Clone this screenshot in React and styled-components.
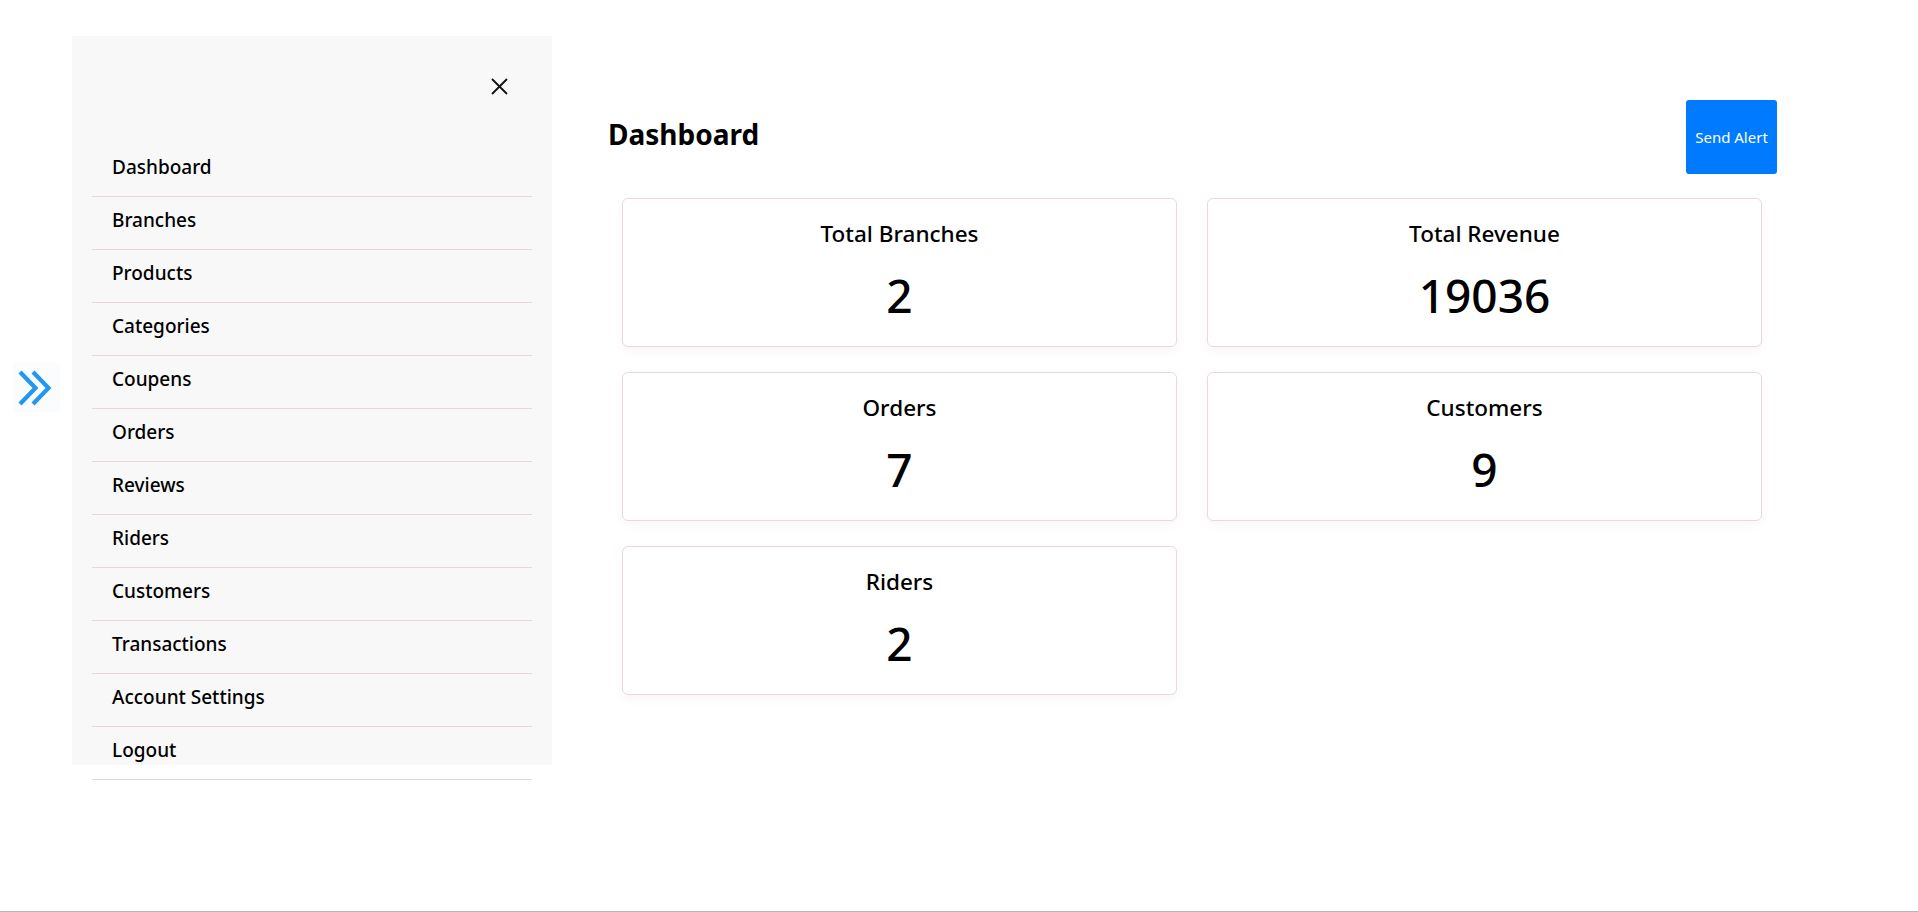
import React from "react";
import styled, { createGlobalStyle } from "styled-components";

const GlobalStyle = createGlobalStyle`
    body {
        margin: 0;
        font-family: "Noto Sans", "Open Sans", sans-serif;
        color: #000;
        background: #fff;
    }
`;

const menu = [
    "Dashboard",
    "Branches",
    "Products",
    "Categories",
    "Coupens",
    "Orders",
    "Reviews",
    "Riders",
    "Customers",
    "Transactions",
    "Account Settings",
    "Logout",
];

const stats = [
    { title: "Total Branches", value: 2 },
    { title: "Total Revenue", value: 19036 },
    { title: "Orders", value: 7 },
    { title: "Customers", value: 9 },
    { title: "Riders", value: 2 },
];

export default function App() {
    return (
        <>
            <GlobalStyle />
            <Page>
                <Gutter>
                    <Toggle aria-label="open menu">
                        <svg width="35" height="36" viewBox="0 0 35 36" fill="none">
                            <polyline
                                points="2,2 17.5,18 2,34"
                                stroke="#2196f3"
                                strokeWidth="4.2"
                            />
                            <polyline
                                points="15,2 30.5,18 15,34"
                                stroke="#2196f3"
                                strokeWidth="4.2"
                            />
                        </svg>
                    </Toggle>
                </Gutter>
                <Sidebar>
                    <SideHead>
                        <Close aria-label="close menu">
                            <svg width="17" height="17" viewBox="0 0 17 17">
                                <path
                                    d="M1 1 L16 16 M16 1 L1 16"
                                    stroke="#111"
                                    strokeWidth="1.8"
                                />
                            </svg>
                        </Close>
                    </SideHead>
                    <Menu>
                        {menu.map(item => (
                            <MenuItem key={item}>{item}</MenuItem>
                        ))}
                    </Menu>
                </Sidebar>
                <Main>
                    <Header>
                        <h1>Dashboard</h1>
                        <AlertButton>Send Alert</AlertButton>
                    </Header>
                    <Grid>
                        {stats.map(stat => (
                            <Card key={stat.title}>
                                <h3>{stat.title}</h3>
                                <span>{stat.value}</span>
                            </Card>
                        ))}
                    </Grid>
                </Main>
            </Page>
        </>
    );
}

const Page = styled.div`
    display: flex;
    flex-direction: row;
    align-items: flex-start;
    height: 911px;
    border-bottom: 1px solid #b2b5c3;
    overflow: hidden;
`;

const Gutter = styled.div`
    width: 72px;
    display: flex;
    justify-content: center;
    padding-top: 363px;
`;

const Toggle = styled.button`
    width: 47px;
    height: 49px;
    display: flex;
    align-items: center;
    justify-content: center;
    padding: 0 2px 0 0;
    border: 0;
    background: #fbfcfe;
    cursor: pointer;
`;

const Sidebar = styled.aside`
    width: 480px;
    height: 729px;
    margin-top: 36px;
    background: #f8f8f8;
    display: flex;
    flex-direction: column;
`;

const SideHead = styled.div`
    flex-shrink: 0;
    height: 108px;
    display: flex;
    justify-content: flex-end;
    align-items: flex-start;
    padding: 42px 44px 0 0;
    box-sizing: border-box;
`;

const Close = styled.button`
    width: 17px;
    height: 17px;
    padding: 0;
    border: 0;
    background: none;
    display: flex;
    cursor: pointer;
`;

const Menu = styled.ul`
    flex-shrink: 0;
    list-style: none;
    margin: 0 20px;
    padding: 0;
`;

const MenuItem = styled.li`
    height: 53px;
    box-sizing: border-box;
    padding: 10px 0 0 20px;
    border-bottom: 1px solid #e9d6d8;
    font-size: 19px;
    font-weight: 500;
    line-height: 27px;
    cursor: pointer;
`;

const Main = styled.main`
    width: 1169px;
    margin-left: 56px;
    padding-top: 100px;
`;

const Header = styled.div`
    display: flex;
    justify-content: space-between;
    align-items: center;
    & h1 {
        margin: 0 0 7px;
        font-size: 28px;
        font-weight: 700;
    }
`;

const AlertButton = styled.button`
    width: 91px;
    height: 74px;
    border: 0;
    border-radius: 3px;
    background: #007bff;
    color: #fff;
    font-family: "Noto Sans", sans-serif;
    font-size: 15px;
    padding: 0;
    cursor: pointer;
`;

const Grid = styled.div`
    display: grid;
    grid-template-columns: 555px 555px;
    column-gap: 30px;
    row-gap: 25px;
    padding: 24px 0 0 14px;
`;

const Card = styled.div`
    height: 149px;
    box-sizing: border-box;
    padding-top: 21px;
    display: flex;
    flex-direction: column;
    align-items: center;
    background: #fff;
    border: 1px solid #ecd8db;
    border-radius: 6px;
    box-shadow: 0 4px 12px rgba(0, 0, 0, 0.04);
    & h3 {
        margin: 0;
        font-size: 22.5px;
        font-weight: 500;
        line-height: 27px;
    }
    & span {
        margin-top: 18px;
        font-size: 46px;
        font-weight: 500;
        line-height: 60px;
    }
`;
